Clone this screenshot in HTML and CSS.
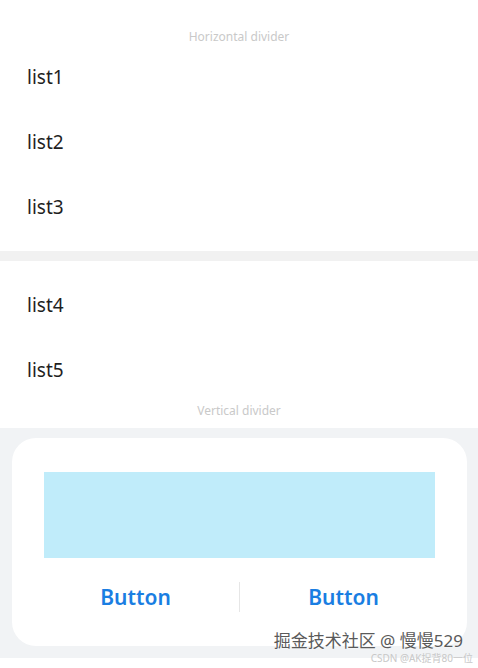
FILE: index.html
```html
<!DOCTYPE html>
<html lang="en">
  <head>
    <meta charset="UTF-8" />
    <meta name="viewport" content="width=device-width, initial-scale=1.0" />
    <title>Divider</title>
    <link rel="stylesheet" href="styles.css">
  </head>
  <body>
    <div class="page">
      <div class="caption caption-top">Horizontal divider</div>
      <ul class="list">
        <li>list1</li>
        <li>list2</li>
        <li>list3</li>
      </ul>
      <div class="thick-divider"></div>
      <ul class="list list-second">
        <li>list4</li>
        <li>list5</li>
      </ul>
      <div class="caption caption-bottom">Vertical divider</div>

      <div class="panel">
        <div class="card">
          <div class="block"></div>
          <div class="buttons">
            <button class="btn">Button</button>
            <span class="vline"></span>
            <button class="btn">Button</button>
          </div>
        </div>
      </div>
      <div class="footer"></div>
    </div>

    <div class="watermark">
      <div class="wm-main">掘金技术社区 @ 慢慢529</div>
      <div class="wm-sub">CSDN @AK捉背80一位</div>
    </div>
  </body>
</html>
```

FILE: styles.css
```css
body {
  margin: 0;
  background: #fff;
  font-family: "Noto Sans", "Noto Sans CJK SC", sans-serif;
}
.page {
  width: 478px;
  height: 668px;
  display: flex;
  flex-direction: column;
}
.caption {
  text-align: center;
  font-size: 12px;
  color: #c9c9c9;
  line-height: 14px;
}
.caption-top {
  padding-top: 30px;
  height: 15px;
}
.list {
  list-style: none;
  margin: 0;
  padding: 0;
}
.list li {
  height: 65px;
  line-height: 65px;
  padding-left: 27px;
  font-size: 19px;
  color: #1f1f1f;
}
.thick-divider {
  height: 10px;
  margin-top: 11px;
  margin-bottom: 12px;
  background: #f1f1f1;
}
.caption-bottom {
  height: 25px;
  line-height: 16px;
}
.panel {
  background: #f1f3f5;
  padding: 10px 11px 12px 12px;
}
.card {
  background: #fff;
  border-radius: 24px;
  height: 208px;
  box-sizing: border-box;
  padding: 34px 32px 0 32px;
}
.block {
  height: 86px;
  background: #c0ecfa;
}
.buttons {
  display: flex;
  align-items: center;
  height: 78px;
  margin: 0 -12px;
}
.btn {
  flex: 1;
  border: none;
  background: none;
  font-family: inherit;
  font-size: 21px;
  font-weight: 600;
  color: #1a7ee2;
  padding: 0;
}
.vline {
  width: 1px;
  height: 30px;
  background: #e6e6e6;
}
.footer {
  flex: 1;
  background: #fff;
}
.watermark {
  position: absolute;
  right: 5px;
  top: 630px;
  text-align: right;
}
.wm-main {
  font-size: 17px;
  line-height: 22px;
  color: #5a5a5a;
  text-shadow: 0 0 2px #fff;
  padding-right: 10px;
}
.wm-sub {
  font-size: 10px;
  line-height: 12px;
  color: #c8c8c8;
}
```
